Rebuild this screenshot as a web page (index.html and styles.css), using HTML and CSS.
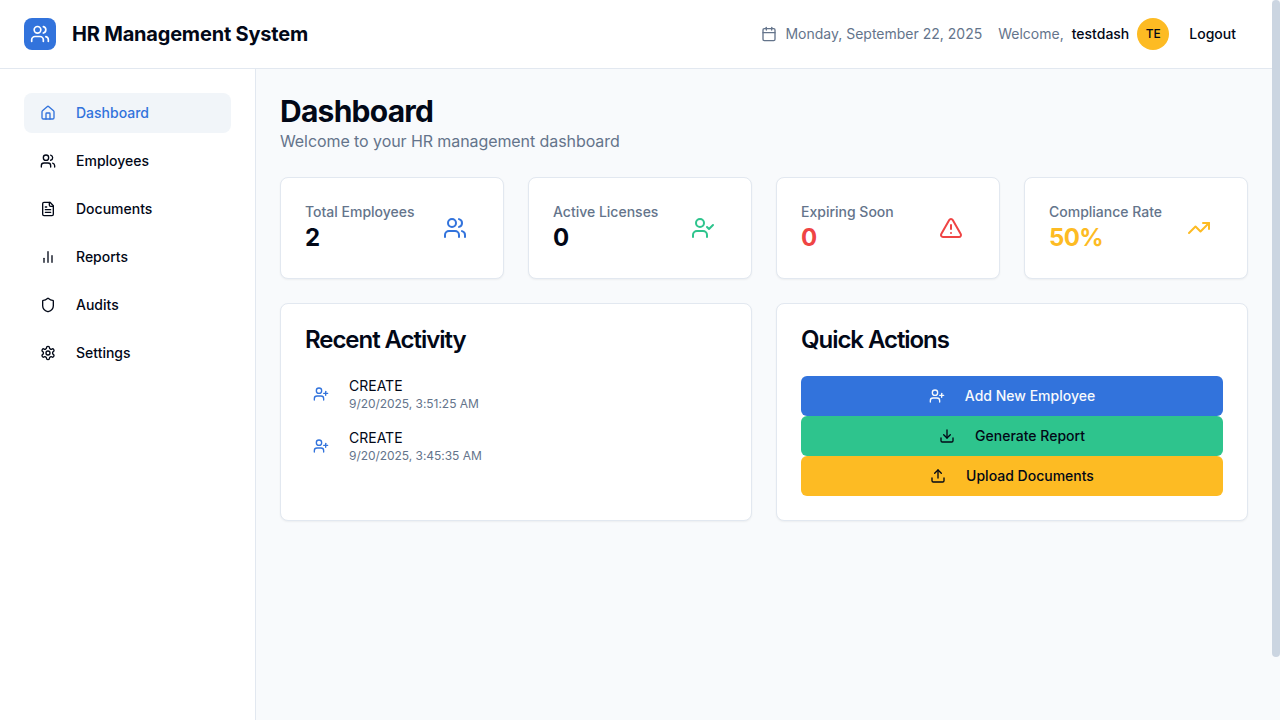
FILE: index.html
```html
<!DOCTYPE html>
<html lang="en">
<head>
    <meta charset="UTF-8">
    <meta name="viewport" content="width=device-width, initial-scale=1.0">
    <title>HR Management System</title>
    <link rel="stylesheet" href="styles.css">
</head>
<body>
    <svg class="icon-defs" aria-hidden="true">
        <symbol id="i-users" viewBox="0 0 24 24"><path d="M16 21v-2a4 4 0 0 0-4-4H6a4 4 0 0 0-4 4v2"/><circle cx="9" cy="7" r="4"/><path d="M22 21v-2a4 4 0 0 0-3-3.87"/><path d="M16 3.13a4 4 0 0 1 0 7.75"/></symbol>
        <symbol id="i-calendar" viewBox="0 0 24 24"><path d="M8 2v4"/><path d="M16 2v4"/><rect width="18" height="18" x="3" y="4" rx="2"/><path d="M3 10h18"/></symbol>
        <symbol id="i-home" viewBox="0 0 24 24"><path d="M15 21v-8a1 1 0 0 0-1-1h-4a1 1 0 0 0-1 1v8"/><path d="M3 10a2 2 0 0 1 .709-1.528l7-5.999a2 2 0 0 1 2.582 0l7 5.999A2 2 0 0 1 21 10v9a2 2 0 0 1-2 2H5a2 2 0 0 1-2-2z"/></symbol>
        <symbol id="i-file" viewBox="0 0 24 24"><path d="M15 2H6a2 2 0 0 0-2 2v16a2 2 0 0 0 2 2h12a2 2 0 0 0 2-2V7Z"/><path d="M14 2v4a2 2 0 0 0 2 2h4"/><path d="M10 9H8"/><path d="M16 13H8"/><path d="M16 17H8"/></symbol>
        <symbol id="i-chart" viewBox="0 0 24 24"><path d="M18 20V10"/><path d="M12 20V4"/><path d="M6 20v-6"/></symbol>
        <symbol id="i-shield" viewBox="0 0 24 24"><path d="M20 13c0 5-3.5 7.5-7.66 8.95a1 1 0 0 1-.67-.01C7.5 20.5 4 18 4 13V6a1 1 0 0 1 1-1c2 0 4.5-1.2 6.24-2.72a1.17 1.17 0 0 1 1.52 0C14.51 3.81 17 5 19 5a1 1 0 0 1 1 1z"/></symbol>
        <symbol id="i-settings" viewBox="0 0 24 24"><path d="M12.22 2h-.44a2 2 0 0 0-2 2v.18a2 2 0 0 1-1 1.73l-.43.25a2 2 0 0 1-2 0l-.15-.08a2 2 0 0 0-2.73.73l-.22.38a2 2 0 0 0 .73 2.73l.15.1a2 2 0 0 1 1 1.72v.51a2 2 0 0 1-1 1.74l-.15.09a2 2 0 0 0-.73 2.73l.22.38a2 2 0 0 0 2.73.73l.15-.08a2 2 0 0 1 2 0l.43.25a2 2 0 0 1 1 1.73V20a2 2 0 0 0 2 2h.44a2 2 0 0 0 2-2v-.18a2 2 0 0 1 1-1.73l.43-.25a2 2 0 0 1 2 0l.15.08a2 2 0 0 0 2.73-.73l.22-.39a2 2 0 0 0-.73-2.73l-.15-.08a2 2 0 0 1-1-1.74v-.5a2 2 0 0 1 1-1.74l.15-.09a2 2 0 0 0 .73-2.73l-.22-.38a2 2 0 0 0-2.73-.73l-.15.08a2 2 0 0 1-2 0l-.43-.25a2 2 0 0 1-1-1.73V4a2 2 0 0 0-2-2z"/><circle cx="12" cy="12" r="3"/></symbol>
        <symbol id="i-user-check" viewBox="0 0 24 24"><path d="M16 21v-2a4 4 0 0 0-4-4H6a4 4 0 0 0-4 4v2"/><circle cx="9" cy="7" r="4"/><polyline points="16 11 18 13 22 9"/></symbol>
        <symbol id="i-alert" viewBox="0 0 24 24"><path d="m21.73 18-8-14a2 2 0 0 0-3.48 0l-8 14A2 2 0 0 0 4 21h16a2 2 0 0 0 1.73-3"/><path d="M12 9v4"/><path d="M12 17h.01"/></symbol>
        <symbol id="i-trending" viewBox="0 0 24 24"><path d="M16 7h6v6"/><path d="m22 7-8.5 8.5-5-5L2 17"/></symbol>
        <symbol id="i-user-plus" viewBox="0 0 24 24"><path d="M16 21v-2a4 4 0 0 0-4-4H6a4 4 0 0 0-4 4v2"/><circle cx="9" cy="7" r="4"/><path d="M19 8v6"/><path d="M22 11h-6"/></symbol>
        <symbol id="i-download" viewBox="0 0 24 24"><path d="M21 15v4a2 2 0 0 1-2 2H5a2 2 0 0 1-2-2v-4"/><polyline points="7 10 12 15 17 10"/><path d="M12 15V3"/></symbol>
        <symbol id="i-upload" viewBox="0 0 24 24"><path d="M21 15v4a2 2 0 0 1-2 2H5a2 2 0 0 1-2-2v-4"/><polyline points="17 8 12 3 7 8"/><path d="M12 3v12"/></symbol>
    </svg>

    <div class="app">
        <header class="topbar">
            <div class="brand">
                <span class="brand-logo"><svg class="icon icon-20"><use href="#i-users"/></svg></span>
                <span class="brand-name">HR Management System</span>
            </div>
            <div class="topbar-right">
                <span class="date"><svg class="icon icon-16"><use href="#i-calendar"/></svg>Monday, September 22, 2025</span>
                <span class="user">
                    <span class="welcome">Welcome,</span>
                    <span class="username">testdash</span>
                    <span class="avatar">TE</span>
                </span>
                <button class="logout">Logout</button>
            </div>
        </header>

        <div class="layout">
            <aside class="sidebar">
                <nav class="side-nav">
                    <a class="nav-item active" href="#"><svg class="icon icon-16"><use href="#i-home"/></svg>Dashboard</a>
                    <a class="nav-item" href="#"><svg class="icon icon-16"><use href="#i-users"/></svg>Employees</a>
                    <a class="nav-item" href="#"><svg class="icon icon-16"><use href="#i-file"/></svg>Documents</a>
                    <a class="nav-item" href="#"><svg class="icon icon-16"><use href="#i-chart"/></svg>Reports</a>
                    <a class="nav-item" href="#"><svg class="icon icon-16"><use href="#i-shield"/></svg>Audits</a>
                    <a class="nav-item" href="#"><svg class="icon icon-16"><use href="#i-settings"/></svg>Settings</a>
                </nav>
            </aside>

            <main class="content">
                <h1>Dashboard</h1>
                <p class="subtitle">Welcome to your HR management dashboard</p>

                <section class="stats">
                    <div class="card stat">
                        <div>
                            <p class="stat-label">Total Employees</p>
                            <p class="stat-value">2</p>
                        </div>
                        <span class="stat-icon blue"><svg class="icon icon-24"><use href="#i-users"/></svg></span>
                    </div>
                    <div class="card stat">
                        <div>
                            <p class="stat-label">Active Licenses</p>
                            <p class="stat-value">0</p>
                        </div>
                        <span class="stat-icon green"><svg class="icon icon-24"><use href="#i-user-check"/></svg></span>
                    </div>
                    <div class="card stat">
                        <div>
                            <p class="stat-label">Expiring Soon</p>
                            <p class="stat-value red">0</p>
                        </div>
                        <span class="stat-icon red"><svg class="icon icon-24"><use href="#i-alert"/></svg></span>
                    </div>
                    <div class="card stat">
                        <div>
                            <p class="stat-label">Compliance Rate</p>
                            <p class="stat-value yellow">50%</p>
                        </div>
                        <span class="stat-icon yellow"><svg class="icon icon-24"><use href="#i-trending"/></svg></span>
                    </div>
                </section>

                <section class="panels">
                    <div class="card panel">
                        <h2>Recent Activity</h2>
                        <div class="activity">
                            <div class="activity-row">
                                <svg class="icon icon-16 blue"><use href="#i-user-plus"/></svg>
                                <div>
                                    <p class="activity-name">CREATE</p>
                                    <p class="activity-time">9/20/2025, 3:51:25 AM</p>
                                </div>
                            </div>
                            <div class="activity-row">
                                <svg class="icon icon-16 blue"><use href="#i-user-plus"/></svg>
                                <div>
                                    <p class="activity-name">CREATE</p>
                                    <p class="activity-time">9/20/2025, 3:45:35 AM</p>
                                </div>
                            </div>
                        </div>
                    </div>
                    <div class="card panel">
                        <h2>Quick Actions</h2>
                        <div class="actions">
                            <button class="action action-blue"><svg class="icon icon-16"><use href="#i-user-plus"/></svg>Add New Employee</button>
                            <button class="action action-green"><svg class="icon icon-16"><use href="#i-download"/></svg>Generate Report</button>
                            <button class="action action-yellow"><svg class="icon icon-16"><use href="#i-upload"/></svg>Upload Documents</button>
                        </div>
                    </div>
                </section>
            </main>
        </div>
    </div>

    <div class="scrollbar"><div class="scrollbar-thumb"></div></div>
</body>
</html>
```

FILE: styles.css
```css
* {
    box-sizing: border-box;
}
body {
    margin: 0;
    height: 720px;
    overflow: hidden;
    display: flex;
    font-family: Inter, "Liberation Sans", sans-serif;
    font-size: 14px;
    line-height: 20px;
    color: #020817;
    background-color: #f8fafc;
}
p, h1, h2 {
    margin: 0;
}
.icon-defs {
    display: none;
}
.icon {
    fill: none;
    stroke: currentColor;
    stroke-width: 2;
    stroke-linecap: round;
    stroke-linejoin: round;
    flex-shrink: 0;
}
.icon-16 {
    width: 16px;
    height: 16px;
}
.icon-20 {
    width: 20px;
    height: 20px;
}
.icon-24 {
    width: 24px;
    height: 24px;
}
.blue {
    color: #3273dc;
}
.green {
    color: #2ec48d;
}
.red {
    color: #ef4444;
}
.yellow {
    color: #fdbb23;
}

.app {
    flex: 1;
    min-width: 0;
    display: flex;
    flex-direction: column;
}
.scrollbar {
    width: 8px;
    flex-shrink: 0;
    background-color: #f8fafc;
}
.scrollbar-thumb {
    height: 657px;
    border-radius: 4px;
    background-color: #cbd5e1;
}

/* header */
.topbar {
    height: 69px;
    flex-shrink: 0;
    padding: 0 24px;
    display: flex;
    align-items: center;
    justify-content: space-between;
    background-color: #ffffff;
    border-bottom: 1px solid #e2e8f0;
}
.brand {
    display: flex;
    align-items: center;
    gap: 16px;
}
.brand-logo {
    width: 32px;
    height: 32px;
    border-radius: 8px;
    display: flex;
    align-items: center;
    justify-content: center;
    color: #ffffff;
    background-color: #3273dc;
}
.brand-name {
    font-size: 20px;
    line-height: 28px;
    font-weight: 700;
    letter-spacing: -0.2px;
}
.topbar-right {
    display: flex;
    align-items: center;
    gap: 16px;
}
.date {
    display: flex;
    align-items: center;
    gap: 8px;
    color: #64748b;
}
.user {
    display: flex;
    align-items: center;
    gap: 8px;
}
.welcome {
    color: #64748b;
}
.username {
    font-weight: 500;
}
.avatar {
    width: 32px;
    height: 32px;
    border-radius: 50%;
    display: flex;
    align-items: center;
    justify-content: center;
    font-size: 12px;
    font-weight: 500;
    background-color: #fdbb23;
}
.logout {
    height: 40px;
    margin-left: -8px;
    padding: 0 12px;
    border: none;
    background: none;
    color: #020817;
    font: inherit;
    font-weight: 500;
}

/* sidebar */
.layout {
    flex: 1;
    display: flex;
}
.sidebar {
    width: 256px;
    flex-shrink: 0;
    padding: 24px;
    background-color: #ffffff;
    border-right: 1px solid #e2e8f0;
}
.side-nav {
    display: flex;
    flex-direction: column;
    gap: 8px;
}
.nav-item {
    height: 40px;
    padding: 0 16px;
    display: flex;
    align-items: center;
    gap: 20px;
    border-radius: 8px;
    color: #020817;
    text-decoration: none;
    font-weight: 500;
}
.nav-item.active {
    color: #3273dc;
    background-color: #f1f5f9;
}

/* main */
.content {
    flex: 1;
    min-width: 0;
    padding: 24px;
}
h1 {
    font-size: 30px;
    line-height: 36px;
    font-weight: 700;
    letter-spacing: -0.75px;
}
.subtitle {
    font-size: 16px;
    line-height: 24px;
    letter-spacing: -0.08px;
    color: #64748b;
}
.card {
    background-color: #ffffff;
    border: 1px solid #e2e8f0;
    border-radius: 8px;
    box-shadow: 0 1px 2px rgba(0, 0, 0, 0.05);
}
.stats {
    margin-top: 24px;
    display: grid;
    grid-template-columns: repeat(4, 1fr);
    gap: 24px;
}
.stat {
    padding: 24px;
    display: flex;
    align-items: center;
    justify-content: space-between;
}
.stat-label {
    font-weight: 500;
    color: #64748b;
}
.stat-value {
    font-size: 24px;
    line-height: 32px;
    font-weight: 700;
    letter-spacing: -0.6px;
}
.stat-icon {
    padding: 12px;
    display: flex;
}
.panels {
    margin-top: 24px;
    display: grid;
    grid-template-columns: repeat(2, 1fr);
    gap: 24px;
}
.panel {
    padding: 24px;
}
h2 {
    font-size: 24px;
    line-height: 24px;
    font-weight: 600;
    letter-spacing: -1.05px;
    margin-bottom: 24px;
}
.activity {
    display: flex;
    flex-direction: column;
    gap: 16px;
}
.activity-row {
    padding-left: 8px;
    display: flex;
    align-items: center;
    gap: 20px;
}
.activity-time {
    font-size: 12px;
    line-height: 16px;
    letter-spacing: -0.04px;
    color: #64748b;
}
.actions {
    display: flex;
    flex-direction: column;
}
.action {
    height: 40px;
    display: flex;
    align-items: center;
    justify-content: center;
    gap: 20px;
    border: none;
    border-radius: 6px;
    color: #020817;
    font: inherit;
    font-weight: 500;
}
.action-blue {
    color: #f8fafc;
    background-color: #3273dc;
}
.action-green {
    background-color: #2ec48d;
}
.action-yellow {
    background-color: #fdbb23;
}
```
